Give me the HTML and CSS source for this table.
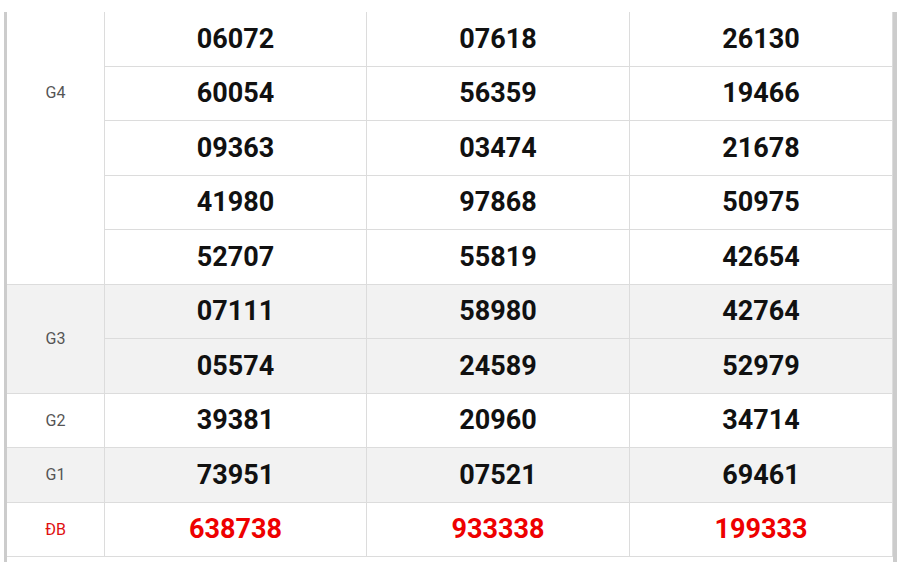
FILE: index.html
```html
<!DOCTYPE html>
<html lang="vi">
<head>
<meta charset="utf-8">
<title>Kết quả</title>
<link rel="stylesheet" href="styles.css">
</head>
<body>
<div class="frame">
  <div class="results">
    <div class="label span5 top">G4</div>
    <div class="num">06072</div><div class="num">07618</div><div class="num">26130</div>
    <div class="num">60054</div><div class="num">56359</div><div class="num">19466</div>
    <div class="num">09363</div><div class="num">03474</div><div class="num">21678</div>
    <div class="num">41980</div><div class="num">97868</div><div class="num">50975</div>
    <div class="num">52707</div><div class="num">55819</div><div class="num">42654</div>

    <div class="label span2 alt">G3</div>
    <div class="num alt">07111</div><div class="num alt">58980</div><div class="num alt">42764</div>
    <div class="num alt">05574</div><div class="num alt">24589</div><div class="num alt">52979</div>

    <div class="label">G2</div>
    <div class="num">39381</div><div class="num">20960</div><div class="num">34714</div>

    <div class="label alt">G1</div>
    <div class="num alt">73951</div><div class="num alt">07521</div><div class="num alt">69461</div>

    <div class="label special">ĐB</div>
    <div class="num special">638738</div><div class="num special">933338</div><div class="num special">199333</div>
  </div>
</div>
</body>
</html>
```
FILE: styles.css
```css
html, body {
  margin: 0;
  padding: 0;
  background: #fff;
}
body {
  font-family: Roboto, "Liberation Sans", Arial, sans-serif;
}
.frame {
  margin-left: 4px;
  margin-top: 12px;
  width: 886px;
  border-left: 3px solid #cccccc;
  border-right: 4px solid #cccccc;
  padding-bottom: 20px;
}
.results {
  display: grid;
  grid-template-columns: 98px 262px 263px 263px;
  grid-auto-rows: 54.5px;
}
.results > div {
  box-sizing: border-box;
  border-right: 1px solid #dcdcdc;
  border-bottom: 1px solid #dcdcdc;
  display: flex;
  align-items: center;
  justify-content: center;
}
.label {
  font-size: 16px;
  color: #555;
}
.results > .top {
  align-items: flex-start;
  padding-top: 71px;
}
.span5 { grid-row: span 5; }
.span2 { grid-row: span 2; }
.num {
  font-size: 27px;
  font-weight: 700;
  color: #111;
}
.alt {
  background: #f2f2f2;
}
.label.special {
  color: #e01010;
}
.num.special {
  color: #ee0000;
}
```
